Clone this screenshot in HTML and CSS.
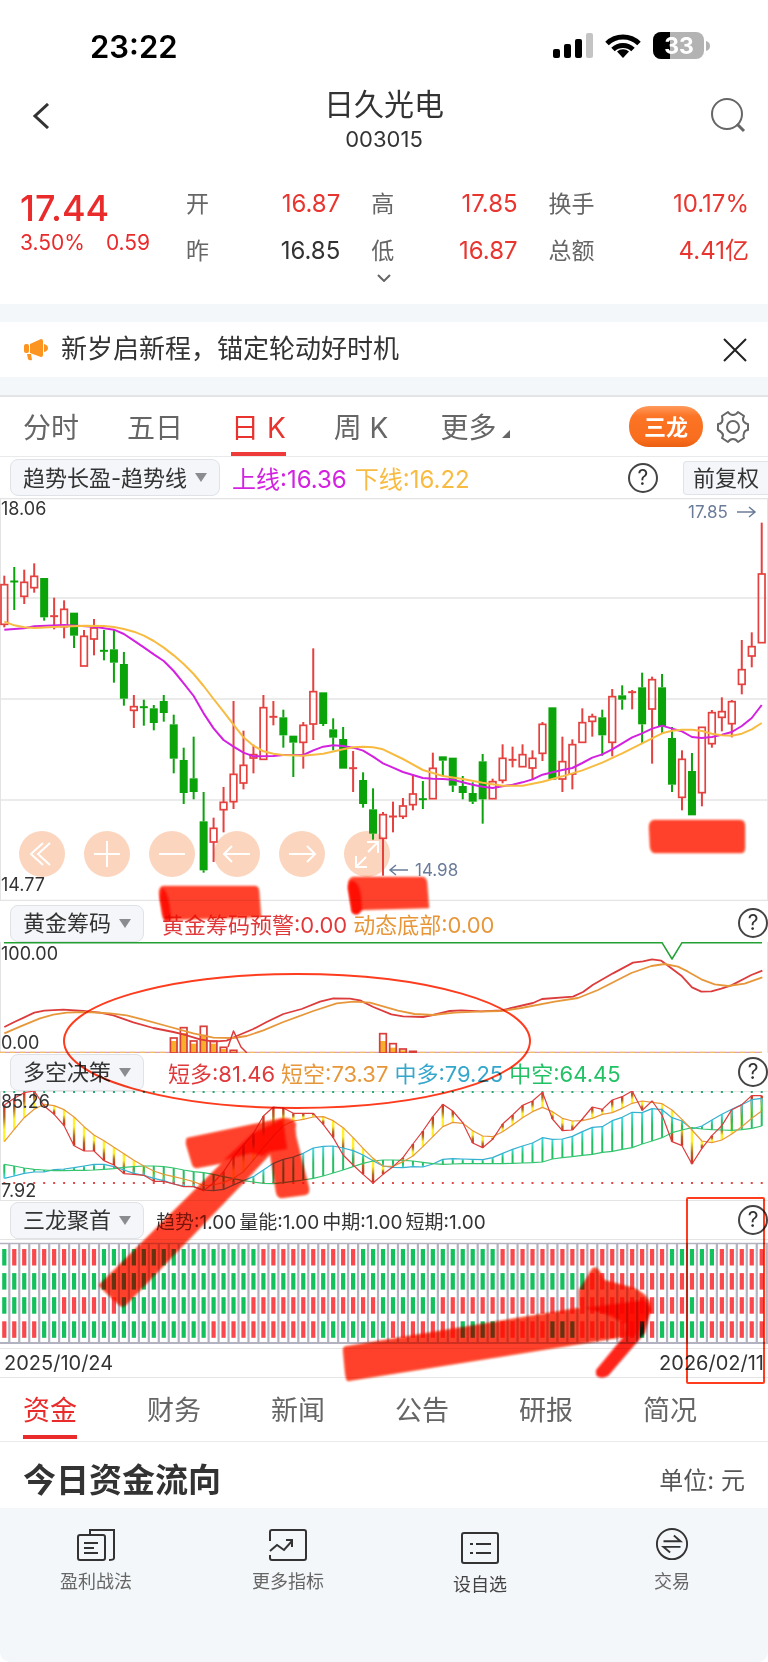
FILE: index.html
```html
<!DOCTYPE html>
<html lang="zh-CN">
<head>
    <meta charset="UTF-8">
    <meta name="viewport" content="width=device-width, initial-scale=1">
    <title>日久光电 003015</title>
    <link rel="stylesheet" href="styles.css">
</head>
<body>
    <div class="status">
        <span class="clock">23:22</span>
        <div class="status-icons">
            <svg width="40" height="26" viewBox="0 0 40 26">
                <rect x="0" y="16" width="7" height="9" rx="2"/>
                <rect x="11" y="11" width="7" height="14" rx="2"/>
                <rect x="22" y="6" width="7" height="19" rx="2"/>
                <rect x="33" y="0" width="7" height="25" rx="2" fill="#c4c4c4"/>
            </svg>
            <svg width="36" height="26" viewBox="0 0 36 26">
                <g fill="none" stroke="#000" stroke-width="5">
                    <path d="M2 10.500a23 23 0 0 1 32 0"/>
                    <path d="M8 16.500a14.500 14.500 0 0 1 20 0"/>
                </g>
                <path d="M18 25l-6-6.500a9 9 0 0 1 12 0z"/>
            </svg>
            <svg width="58" height="28" viewBox="0 0 58 28">
                <rect x="0" y="0" width="51" height="27" rx="8" fill="#b3b3b3"/>
                <path d="M17 0H8a8 8 0 0 0-8 8v11a8 8 0 0 0 8 8h9z"/>
                <path d="M53 9q4 1 4 5t-4 5z" fill="#b3b3b3"/>
                <text x="26" y="22" class="battery-text">33</text>
            </svg>
        </div>
    </div>

    <header class="topbar">
        <button class="icon-btn" aria-label="返回">
            <svg width="18" height="26" viewBox="0 0 18 26"><path d="M16 1L3 13l13 12" fill="none" stroke="#333" stroke-width="3"/></svg>
        </button>
        <div class="stock">
            <h1>日久光电</h1>
            <p>003015</p>
        </div>
        <button class="icon-btn" aria-label="搜索">
            <svg width="36" height="36" viewBox="0 0 36 36"><g fill="none" stroke="#666" stroke-width="2"><circle cx="17" cy="16" r="15"/><path d="M27 26l7 7" stroke-width="3"/></g></svg>
        </button>
    </header>

    <section class="quote">
        <div class="price">
            <strong>17.44</strong>
            <p><span>3.50%</span><span>0.59</span></p>
        </div>
        <dl class="pair">
            <dt>开</dt><dd class="up">16.87</dd>
            <dt>昨</dt><dd>16.85</dd>
        </dl>
        <dl class="pair">
            <dt>高</dt><dd class="up">17.85</dd>
            <dt>低</dt><dd class="up">16.87</dd>
        </dl>
        <dl class="pair">
            <dt>换手</dt><dd class="up">10.17%</dd>
            <dt>总额</dt><dd class="up">4.41亿</dd>
        </dl>
    </section>
    <button class="expand" aria-label="展开">
        <svg width="14" height="8" viewBox="0 0 14 8"><path d="M1 1l6 6 6-6" fill="none" stroke="#666" stroke-width="2"/></svg>
    </button>

    <div class="notice">
        <svg width="24" height="22" viewBox="0 0 24 22" fill="#fb9420">
            <path d="M6 5L17 0q2 0 2 2v14q0 2-2 2L6 14z"/>
            <rect x="0" y="5" width="5" height="9" rx="2"/>
            <path d="M20 5q4 1 4 4t-4 4zM3 15h4l1 6q-3 1-4-1z"/>
        </svg>
        <p>新岁启新程，锚定轮动好时机</p>
        <button class="icon-btn" aria-label="关闭">
            <svg width="24" height="24" viewBox="0 0 24 24"><path d="M1 1l22 22M23 1L1 23" stroke="#222" stroke-width="2"/></svg>
        </button>
    </div>

    <nav class="periods">
        <a href="#">分时</a>
        <a href="#">五日</a>
        <a href="#" class="on">日 K</a>
        <a href="#">周 K</a>
        <a href="#" class="more">更多</a>
        <button class="pill">三龙</button>
        <button class="icon-btn" aria-label="设置">
            <svg width="34" height="34" viewBox="0 0 34 34" fill="none" stroke="#666" stroke-width="2">
                <path d="M12 2q2 3 5 3t5-3l6 4q-2 4 0 6t4 2v6q-3 0-4 3t0 5l-6 4q-2-3-5-3t-5 3l-6-4q2-3 0-5t-4-3v-6q3 0 4-2t0-6z" stroke-linejoin="round"/>
                <circle cx="17" cy="17" r="6"/>
            </svg>
        </button>
    </nav>

    <div class="panel-head first">
        <label class="chip"><select aria-label="主图指标"><option>趋势长盈-趋势线</option></select></label>
        <p class="legend"><span class="c-magenta">上线:16.36</span><span class="c-gold">下线:16.22</span></p>
        <button class="help" aria-label="指标说明">?</button>
        <button class="adjust">前复权</button>
    </div>

    <main class="charts">
        <div class="kline">
            <svg id="kline" class="plot" viewBox="0 0 768 403"></svg>
            <div class="tools">
                <button aria-label="最左"><svg viewBox="0 0 46 46"><path d="M24 12L12 23l12 11M31 12L19 23l12 11"/></svg></button>
                <button aria-label="放大"><svg viewBox="0 0 46 46"><path d="M10 23h26M23 10v26"/></svg></button>
                <button aria-label="缩小"><svg viewBox="0 0 46 46"><path d="M10 23h26"/></svg></button>
                <button aria-label="左移"><svg viewBox="0 0 46 46"><path d="M36 23H10M18 15l-8 8 8 8"/></svg></button>
                <button aria-label="右移"><svg viewBox="0 0 46 46"><path d="M10 23h26M28 15l8 8-8 8"/></svg></button>
                <button aria-label="全屏"><svg viewBox="0 0 46 46"><path d="M23 11h11v11M34 11L24 21M12 25v11h11M12 36l10-10"/></svg></button>
            </div>
        </div>

        <div class="panel-head tall">
            <label class="chip"><select aria-label="副图指标一"><option>黄金筹码</option></select></label>
            <p class="legend"><span class="c-red">黄金筹码预警:0.00</span><span class="c-orange">动态底部:0.00</span></p>
            <button class="help" aria-label="指标说明">?</button>
        </div>
        <svg id="chips" class="plot" viewBox="0 0 768 111"></svg>

        <div class="panel-head">
            <label class="chip"><select aria-label="副图指标二"><option>多空决策</option></select></label>
            <p class="legend wide"><span class="c-red">短多:81.46</span><span class="c-orange">短空:73.37</span><span class="c-blue">中多:79.25</span><span class="c-green">中空:64.45</span></p>
            <button class="help" aria-label="指标说明">?</button>
        </div>
        <svg id="decision" class="plot" viewBox="0 0 768 110"></svg>

        <div class="panel-head">
            <label class="chip"><select aria-label="副图指标三"><option>三龙聚首</option></select></label>
            <p class="legend small"><span>趋势:1.00</span><span>量能:1.00</span><span>中期:1.00</span><span>短期:1.00</span></p>
            <button class="help" aria-label="指标说明">?</button>
        </div>
        <svg id="dragons" class="plot" viewBox="0 0 768 109"></svg>

        <div class="dates"><time>2025/10/24</time><time>2026/02/11</time></div>

        <!-- hand drawn marks over the charts, a light tint below and the ink on top -->
        <svg class="marks tint" viewBox="0 498 768 880"><use href="#strokes"/></svg>
        <svg class="marks ink" viewBox="0 498 768 880">
            <defs>
                <filter id="soft"><feGaussianBlur stdDeviation="1"/></filter>
            </defs>
            <g class="brush">
                <g id="strokes" filter="url(#soft)">
                    <path d="M163 886H255q3 0 4 4l2 27-95 3q-3 0-4-6l-3-21q0-6 4-7z"/>
                    <path d="M353 877h69q4 0 5 5l2 26-69 2q-3 6-8 2l-4-26q0-8 5-9z"/>
                    <path d="M654 820h86q5 0 5 6v22q0 5-4 5h-86q-4 0-5-6l-1-20q0-6 5-7z"/>
                    <path d="M100 1284L250 1135l24 15-26 28-122 127q-4 4-8-1l-17-16q-3-3-1-4z"/>
                    <path d="M187 1138l96-20q12 0 13 7l-9 26-90 17q-4 0-5-4l-6-20q0-5 1-6z"/>
                    <path d="M287 1122l8 2 1 12 13 52q1 6-4 7l-23 3q-5 0-6-6l-6-38z"/>
                    <path d="M343 1350q0-4 5-4L578 1308l68-5 4 8-14 24-288 46q-2 0-3-9z"/>
                    <path d="M579 1290l13-21q3-4 8 3l4 8 30 8q13 6 17 16v8l-26 15-10-7-22-9-14-4z"/>
                </g>
            </g>
            <g class="deep" filter="url(#soft)">
                <path d="M162 888q7 2 9 31l-6 3-5-24z"/>
                <path d="M350 881q8-2 11 14l1 15q-5 8-10 2l-4-24z"/>
                <path d="M224 1160l29-27 30-14 4 30-19 3-5 4-12-3z"/>
                <path d="M585 1308l30-4 30-4 6 9-6 24-37 43q-8 4-12-1v-5l28-34 2-12-20-10z"/>
            </g>
            <g fill="none" stroke="#ff3c1e" stroke-width="2">
                <ellipse cx="297" cy="1041" rx="233" ry="67"/>
                <rect x="687" y="1198" width="77" height="185" rx="1"/>
            </g>
        </svg>
    </main>

    <nav class="sections">
        <a href="#" class="on">资金</a>
        <a href="#">财务</a>
        <a href="#">新闻</a>
        <a href="#">公告</a>
        <a href="#">研报</a>
        <a href="#">简况</a>
    </nav>

    <section class="flow">
        <h2>今日资金流向</h2>
        <span>单位: 元</span>
    </section>

    <footer class="tabbar">
        <a href="#">
            <svg width="38" height="32" viewBox="0 0 38 32"><rect x="1" y="6" width="27" height="25" rx="2"/><path d="M13 5V1h24v28q0 2-5 2M7 14h14M7 19h10M7 24h14"/></svg>
            <span>盈利战法</span>
        </a>
        <a href="#">
            <svg width="38" height="32" viewBox="0 0 38 32"><path d="M1 12V3q0-2 2-2h32q2 0 2 2v26q0 2-2 2H3q-2 0-2-2v-3M1 22l7-6 7 5 8-9"/><path d="M17 11h6v7"/></svg>
            <span>更多指标</span>
        </a>
        <a href="#" class="pick">
            <svg width="38" height="32" viewBox="0 0 38 32"><rect x="1" y="1" width="36" height="30" rx="2"/><path d="M9 12h3M9 21h3M15 12h15M15 21h15"/></svg>
            <span>设自选</span>
        </a>
        <a href="#">
            <svg width="38" height="36" viewBox="0 0 38 36"><circle cx="19" cy="17" r="16"/><path d="M10 14h18l-7-6M28 20H10l7 6"/></svg>
            <span>交易</span>
        </a>
    </footer>

    <script src="charts.js"></script>
</body>
</html>
```
FILE: styles.css
```css
* {
    box-sizing: border-box;
}

body {
    margin: 0;
    background: #fff;
    color: #333;
    font-family: Inter, "Noto Sans CJK SC", sans-serif;
    font-size: 22px;
}

h1, h2, p, dl, dd {
    margin: 0;
    font-weight: 400;
}

a {
    color: inherit;
    text-decoration: none;
}

button {
    border: 0;
    padding: 0;
    background: none;
    color: inherit;
    font: inherit;
}

svg {
    display: block;
    flex: none;
}

.status {
    display: flex;
    justify-content: space-between;
    align-items: center;
    height: 92px;
    padding: 0 57px 0 90px;
}

.clock {
    color: #000;
    font-size: 31px;
    font-weight: 600;
}

.status-icons {
    display: flex;
    align-items: center;
    gap: 12px;
}

.battery-text {
    fill: #fff;
    font-size: 23px;
    font-weight: 700;
    text-anchor: middle;
}

.topbar {
    display: flex;
    justify-content: space-between;
    height: 88px;
    padding: 0 22px 0 32px;
}

.icon-btn {
    display: flex;
    align-items: center;
    justify-content: center;
}

.topbar .icon-btn {
    width: 46px;
    height: 47px;
}

.topbar .icon-btn:first-child {
    justify-content: flex-start;
    width: 36px;
}

.topbar .icon-btn:last-child {
    justify-content: flex-end;
    width: 36px;
}

.stock {
    flex: 1;
    text-align: center;
    padding-right: 10px;
}

.stock h1 {
    font-size: 30px;
    line-height: 24px;
}

.stock p {
    line-height: 24px;
    padding-top: 11px;
}

.up {
    color: #e8352f;
}

.quote {
    display: grid;
    grid-template-columns: 166fr 154fr 146fr 200fr;
    column-gap: 31px;
    padding: 0 19px 0 20px;
    height: 92px;
}

.price {
    color: #e92b2b;
}

.price strong {
    display: block;
    font-size: 36px;
    font-weight: 500;
    line-height: 40px;
    padding-top: 8px;
}

.price p {
    display: flex;
    gap: 21px;
    font-size: 21px;
    line-height: 30px;
}

.pair {
    display: grid;
    grid-template-columns: auto 1fr;
    grid-auto-rows: 47px;
    align-items: center;
    height: 86px;
    font-size: 23px;
    line-height: 40px;
}

.pair dt {
    color: #666;
}

.pair dd {
    text-align: right;
    font-size: 24px;
}

.quote {
    grid-template-columns: 135px 154fr 146fr 200fr;
}

.expand {
    display: flex;
    justify-content: center;
    width: 100%;
    height: 32px;
    padding-top: 2px;
}

.notice {
    display: flex;
    align-items: center;
    gap: 13px;
    height: 91px;
    padding: 0 21px 0 24px;
    border-top: 18px solid #f3f7f9;
    border-bottom: 18px solid #f3f7f9;
}

.notice p {
    flex: 1;
    font-size: 26px;
    line-height: 50px;
    padding-bottom: 2px;
}

.periods {
    display: flex;
    align-items: center;
    height: 62px;
    padding: 0 18px 0 23px;
    border-top: 2px solid #e2e4e6;
    border-bottom: 1px solid #e8eaec;
    color: #666;
    font-size: 28px;
}

.periods a {
    height: 100%;
    line-height: 63px;
    margin-right: 48px;
}

.periods .on {
    color: #e8332f;
    border-bottom: 4px solid #ee3a38;
}

.periods .more::after {
    content: "";
    display: inline-block;
    margin-left: 6px;
    border-left: 8px solid transparent;
    border-bottom: 8px solid #666;
}

.periods .more {
    margin-left: 4px;
    margin-right: auto;
}

.pill {
    width: 74px;
    height: 41px;
    margin-right: 13px;
    border-radius: 20px;
    background: linear-gradient(#ff9a5c, #fc7425 25%, #f96d1e 80%, #ea5f12);
    color: #fff;
    font-size: 22px;
    font-weight: 700;
    line-height: 36px;
}

.panel-head {
    display: flex;
    align-items: center;
    height: 38px;
    padding-left: 10px;
}

.panel-head.first,
.panel-head.tall {
    height: 41px;
}

.panel-head.tall {
    padding-top: 3px;
}

.chip {
    display: flex;
    align-items: center;
    min-width: 134px;
    height: 37px;
    padding: 0 12px;
    border: 1px solid #dfe3e8;
    border-radius: 8px;
    background: #f4f6f9;
}

.chip::after {
    content: "";
    margin-left: 7px;
    border: 6px solid transparent;
    border-top: 9px solid #8a8c8f;
    border-bottom: 0;
}

.chip select {
    appearance: none;
    border: 0;
    padding: 0;
    background: none;
    color: #333;
    font: inherit;
    line-height: 30px;
}

.legend {
    display: flex;
    flex: 1;
    gap: 6px;
    padding-left: 18px;
    font-size: 22px;
    white-space: nowrap;
}

.first .legend {
    gap: 8px;
    padding-left: 12px;
    font-size: 24px;
}

.legend.wide {
    padding-left: 24px;
}

.legend.small {
    gap: 3px;
    padding-left: 12px;
    font-size: 19px;
}

.c-magenta { color: #d321e0; }
.c-gold { color: #f8bb42; }
.c-red { color: #e0393c; }
.c-orange { color: #e7973a; }
.c-blue { color: #35a6cc; }
.c-green { color: #22c166; }

.help {
    width: 30px;
    height: 30px;
    border: 2px solid #444;
    border-radius: 50%;
    font-size: 21px;
    line-height: 24px;
}

.adjust {
    height: 34px;
    margin-left: 25px;
    padding: 0 9px;
    border: 1px solid #e0e4e8;
    border-right: 0;
    border-radius: 4px 0 0 4px;
    background: #f4f6f9;
    line-height: 30px;
}

.charts,
.kline {
    position: relative;
}

.plot {
    width: 100%;
    height: auto;
}

.kline .plot {
    position: relative;
    z-index: 1;
    pointer-events: none;
}

.plot text {
    fill: #333;
    font-size: 18px;
}

.plot .peak {
    fill: #6b7c99;
    font-size: 17px;
}

.tools {
    position: absolute;
    left: 19px;
    bottom: 24px;
    display: flex;
    gap: 19px;
}

.tools button {
    width: 46px;
    height: 46px;
    border-radius: 50%;
    background: #fcd5be;
}

.tools path {
    fill: none;
    stroke: #fff;
    stroke-width: 2;
}

.marks {
    position: absolute;
    inset: 0;
    z-index: 2;
    width: 100%;
    overflow: visible;
    pointer-events: none;
}

.marks.tint {
    fill: #ff4000;
    opacity: .35;
}

.marks.ink {
    mix-blend-mode: multiply;
}

.brush {
    fill: #ff2a08;
    opacity: .78;
}

.deep {
    fill: #ff0c00;
    opacity: .9;
}

.dates {
    display: flex;
    justify-content: space-between;
    padding: 0 4px;
    border-top: 1px solid #e5e5e5;
    border-bottom: 1px solid #e5e5e5;
    font-size: 20px;
    line-height: 28px;
}

.sections {
    display: flex;
    gap: 70px;
    height: 64px;
    padding: 0 23px;
    border-bottom: 1px solid #e8eaec;
    color: #666;
    font-size: 27px;
    line-height: 66px;
}

.sections .on {
    color: #e92b2b;
    height: 61px;
    border-bottom: 4px solid #e92b2b;
}

.flow {
    display: flex;
    justify-content: space-between;
    align-items: center;
    height: 66px;
    padding: 6px 23px 0;
}

.flow h2 {
    font-size: 33px;
    font-weight: 700;
}

.flow span {
    color: #555;
    font-size: 24px;
}

.tabbar {
    display: grid;
    grid-template-columns: repeat(4, 1fr);
    min-height: 154px;
    padding-top: 20px;
    border-radius: 0 0 10px 10px;
    background: #f3f7f9;
    color: #666;
    font-size: 18px;
}

.tabbar a {
    display: flex;
    flex-direction: column;
    align-items: center;
}

.tabbar svg {
    height: 34px;
    fill: none;
    stroke: #333;
    stroke-width: 2;
}

.tabbar span {
    line-height: 24px;
    margin-top: 8px;
}

.tabbar .pick {
    padding-top: 3px;
    color: #444;
}
```
FILE: charts.js
```js
var RED = "#e4413f";
var GREEN = "#0aa30a";

// x position of a trading day
function dayX(i) {
    return 4.3 + i * 9.966;
}

function line(x1, y1, x2, y2, color, width) {
    return "<line x1='" + x1 + "' y1='" + y1 + "' x2='" + x2 + "' y2='" + y2 + "' stroke='" + color + "' stroke-width='" + (width || 1) + "'/>";
}

function rect(x, y, w, h, fill, stroke) {
    return "<rect x='" + x + "' y='" + y + "' width='" + w + "' height='" + h + "' fill='" + fill + "'" + (stroke ? " stroke='" + stroke + "' stroke-width='1.7'" : "") + "/>";
}

function text(x, y, s, cls) {
    return "<text x='" + x + "' y='" + y + "' class='" + (cls || "") + "'>" + s + "</text>";
}

function poly(points, color, width) {
    return "<polyline points='" + points.join(" ") + "' fill='none' stroke='" + color + "' stroke-width='" + width + "' stroke-linejoin='round'/>";
}

// "x y,x y" list in thirds of a unit, moved up by top
function path(list, top, toX) {
    return list.split(",").map(function (p) {
        var v = p.trim().split(" ");
        return toX(+v[0]) + "," + (v[1] - top) / 3;
    });
}

// ---- daily candles: colour, high, body top, body bottom, low
var candles = [
    "r 257 284 403 412", "g 231 273 276 360", "r 239 277 319 342", "r 220 259 293 308", "g 264 264 382 392",
    "r 323 377 380 418", "r 331 358 410 445", "g 368 368 437 474", "r 420 439 528 528", "r 387 414 447 496",
    "g 420 481 484 511", "g 420 478 518 578", "g 486 522 626 647", "r 615 650 661 714", "g 629 650 653 707",
    "g 645 655 699 721", "g 615 633 669 695", "g 674 703 806 850", "g 773 810 909 942", "g 740 865 906 928",
    "g 906 994 1141 1148", "r 983 1015 1056 1116", "r 891 937 959 1027", "r 633 853 935 957", "r 722 826 879 898",
    "r 764 794 804 850", "r 615 653 808 808", "r 633 679 682 706", "g 659 682 736 773", "g 737 737 758 861",
    "r 696 706 757 836", "r 475 605 702 750", "g 607 607 702 708", "g 685 718 743 781", "g 711 747 836 836",
    "r 783 833 836 906", "g 847 870 942 953", "g 895 958 1031 1049", "r 966 974 1045 1157", "r 935 978 981 1027",
    "r 924 948 979 987", "r 854 912 944 961", "g 873 926 929 957", "r 788 835 926 926", "g 799 799 812 859",
    "g 803 803 887 906", "g 858 888 909 928", "g 877 909 935 942", "g 792 814 928 1001", "r 866 875 926 926",
    "r 763 805 871 880", "r 770 808 811 832", "r 763 794 830 830", "r 781 805 834 869", "r 696 703 790 813",
    "g 652 652 869 869", "r 740 815 867 906", "r 748 764 852 898", "r 655 698 757 757", "r 671 680 694 740",
    "g 659 682 736 797", "r 597 620 757 799", "g 586 616 629 659", "r 600 605 608 658", "g 548 592 703 761",
    "r 560 569 657 821", "g 552 592 709 731", "g 711 744 884 906", "r 781 808 922 961", "g 789 843 976 976",
    "r 712 712 908 949", "r 660 668 761 773", "r 622 665 682 724", "r 630 635 701 742", "r 450 539 583 613",
    "r 427 470 498 532", "r 98 252 458 458"
];
var upper = "0 419,2 415,3 409,6 405,9 410,11 419,12 432,13 452,14 472,15 493,16 513,17 543,18 580,19 618,20 670,21 715,22 750,23 770,24 788,25 799,27 798,28 795,30 795,31 781,32 770,33 766,34 768,35 773,36 782,37 800,38 820,39 833,40 846,41 855,42 864,43 866,44 867,45 869,46 877,47 884,48 890,49 894,50 889,51 884,52 877,53 868,54 854,55 847,56 840,57 834,58 819,59 803,60 793,61 778,62 760,63 742,64 730,65 716,66 707,67 716,68 724,69 741,70 744,71 741,72 734,73 726,74 708,75 684,76 645";
var lower = "0 395,1 406,2 412,3 414,5 411,8 407,10 408,11 411,12 417,13 425,14 437,15 453,16 473,17 496,18 522,19 552,20 588,21 627,22 665,23 704,24 742,25 767,26 784,27 791,28 795,30 797,32 791,34 778,35 772,36 770,37 772,38 778,40 807,42 840,44 858,46 867,48 878,50 887,52 887,54 875,56 859,58 841,60 818,62 790,64 760,66 730,67 722,68 719,69 719,70 723,71 731,72 736,73 737,74 731,75 718,76 699";

function drawKline() {
    var out = "";
    [0.5, 100, 201, 302, 402.5].forEach(function (y) {
        out += line(0, y, 768, y, "#e4e4e4", 1.5);
    });
    out += line(0.5, 0, 0.5, 403, "#e4e4e4") + line(767.5, 0, 767.5, 403, "#e4e4e4");
    candles.forEach(function (row, i) {
        var c = row.split(" ");
        var y = c.slice(1).map(function (v) { return (v - 24) / 3; });
        var x = dayX(i);
        var color = c[0] == "r" ? RED : GREEN;
        out += line(x, y[0], x, y[1], color, 2) + line(x, y[2], x, y[3], color, 2);
        if (y[2] - y[1] < 2) {
            out += line(x - 4, y[1] + 0.5, x + 4, y[1] + 0.5, color, 2);
        } else if (c[0] == "r") {
            out += rect(x - 3.3, y[1], 6.6, y[2] - y[1], "none", RED);
        } else {
            out += rect(x - 4, y[1], 8, y[2] - y[1], GREEN);
        }
    });
    out += poly(path(upper, 24, dayX), "#d321e0", 2);
    out += poly(path(lower, 24, dayX), "#f8bb42", 2);
    out += text(1, 17, "18.06") + text(1, 393, "14.77");
    out += text(688, 20, "17.85", "peak") + text(415, 378, "14.98", "peak");
    out += "<path d='M737 14h18M749 9l6 5-6 5M408 372h-18M396 367l-6 5 6 5' fill='none' stroke='#6b7c99' stroke-width='1.5'/>";
    document.getElementById("kline").innerHTML = out;
}

// ---- golden chips
var fast = "13 441,43 426,73 412,103 398,133 392,190 389,250 393,300 398,340 406,400 427,460 444,520 456,550 463,600 478,640 485,680 482,710 468,760 447,800 426,850 402,905 387,960 365,1000 355,1050 356,1080 361,1120 381,1174 403,1209 409,1269 411,1299 405,1349 393,1384 391,1444 394,1504 391,1599 369,1626 357,1719 350,1749 336,1779 314,1839 280,1899 248,1929 244,1956 238,1984 242,2014 265,2046 289,2076 322,2104 335,2134 334,2164 326,2194 316,2254 285,2287 272";
var slow = "13 460,60 440,120 415,160 404,200 398,260 396,330 400,380 406,430 419,500 438,580 460,640 473,700 474,740 468,790 451,850 426,940 393,1010 370,1060 365,1110 368,1194 392,1244 402,1299 405,1364 398,1434 395,1504 393,1564 384,1664 365,1734 354,1794 330,1894 279,1954 258,1994 252,2034 260,2064 275,2104 298,2144 313,2184 318,2234 311,2287 292";

function drawChips() {
    var third = function (x) { return x / 3; };
    var out = line(0.5, 0, 0.5, 111, "#e4e4e4") + line(767.5, 0, 767.5, 111, "#e4e4e4");
    out += line(0, 110.5, 762, 110.5, "#dba0b0", 1.5);
    out += "<line x1='0' y1='110.5' x2='762' y2='110.5' stroke='#f3c069' stroke-width='1.5' stroke-dasharray='5 5'/>";
    // day, outline top, fill top
    [[17, 474, 483], [18, 443, 459], [19, 483, 491], [20, 439, 464], [21, 483, 491], [22, 502, 507], [23, 511, 514], [38, 461, 483], [39, 491, 503], [40, 507, 511], [41, 514, 517]].forEach(function (b) {
        var x = dayX(b[0]) - 3.3;
        out += rect(x, (b[2] - 186) / 3, 6.6, (519 - b[2]) / 3, "#f6ae2b");
        out += rect(x, (b[1] - 186) / 3, 6.6, (519 - b[1]) / 3, "none", "#d93f3a");
    });
    out += poly(path(fast, 186, third), "#dc3c3c", 1.8);
    out += poly(path(slow, 186, third), "#e7973a", 1.8);
    out += poly(["228,105", "233.500,89", "241,105", "247,111"], "#dc3c3c", 1.5);
    out += poly(["4,0.700", "662,0.700", "672,17", "682,0.700", "762,0.700"], "#22a032", 1.5);
    out += text(1, 18, "100.00") + text(1, 107, "0.00");
    document.getElementById("chips").innerHTML = out;
}

// ---- long / short decision
var shortUp = [135, 115, 98, 93, 138, 163, 197, 257, 273, 273, 302, 315, 341, 343, 346, 364, 364, 372, 380, 380, 392, 368, 335, 290, 255, 220, 168, 141, 144, 160, 160, 160, 193, 233, 285, 315, 343, 369, 343, 320, 293, 252, 213, 170, 133, 153, 188, 249, 263, 238, 192, 165, 136, 123, 97, 177, 212, 210, 177, 141, 148, 120, 110, 93, 151, 123, 165, 245, 257, 312, 265, 227, 197, 149, 134, 107, 107];
var shortDown = [245, 208, 173, 148, 133, 137, 149, 171, 200, 225, 242, 262, 281, 301, 318, 333, 343, 350, 357, 365, 377, 375, 367, 355, 335, 300, 263, 228, 197, 183, 178, 171, 170, 182, 203, 233, 265, 295, 318, 319, 305, 288, 260, 230, 200, 187, 190, 212, 228, 230, 215, 195, 173, 155, 142, 155, 175, 183, 182, 175, 163, 158, 145, 130, 123, 127, 131, 150, 178, 210, 243, 248, 240, 222, 200, 175, 153];
var midUp = [355, 348, 340, 336, 336, 329, 327, 323, 318, 313, 313, 320, 330, 340, 346, 355, 362, 372, 378, 380, 390, 392, 388, 375, 362, 350, 330, 310, 298, 291, 280, 264, 259, 258, 264, 272, 285, 302, 318, 322, 323, 320, 321, 312, 298, 296, 297, 298, 299, 293, 280, 268, 258, 249, 233, 238, 237, 229, 215, 202, 200, 182, 172, 157, 158, 146, 149, 173, 183, 207, 198, 180, 163, 148, 134, 119, 115];
var midDown = [313, 318, 324, 328, 330, 332, 332, 331, 331, 330, 328, 326, 322, 320, 318, 318, 320, 324, 330, 335, 338, 343, 350, 356, 362, 366, 370, 371, 368, 364, 360, 355, 348, 339, 330, 320, 310, 303, 300, 300, 301, 303, 307, 311, 313, 312, 311, 311, 311, 311, 311, 310, 309, 308, 306, 297, 293, 290, 286, 283, 277, 274, 268, 263, 252, 243, 233, 218, 210, 203, 207, 209, 210, 211, 209, 205, 198];

function series(list) {
    return list.map(function (v, i) { return dayX(i) + "," + (v - 93) / 3; });
}

function gradient(id, stops) {
    return "<linearGradient id='" + id + "' x1='0' y1='0' x2='0' y2='1'>" + stops.map(function (c, i) {
        return "<stop offset='" + i / (stops.length - 1) + "' stop-color='" + c + "'/>";
    }).join("") + "</linearGradient>";
}

function drawDecision() {
    var out = "<defs>" + gradient("hot", ["#d62a20", "#b06a20", "#fff22a", "#fff22a"]) + gradient("cool", ["#fff22a", "#fff22a", "#b06a20", "#d62a20"])
        + gradient("sea", ["#3fe0f0", "#23bf62", "#23bf62"]) + gradient("sea2", ["#23bf62", "#23bf62", "#3fe0f0"]) + "</defs>";
    out += line(0, 0.5, 768, 0.5, "#e8e8e8") + line(0, 109.5, 768, 109.5, "#e4e4e4") + line(0.5, 0, 0.5, 110, "#e4e4e4");
    for (var i = 0; i < 77; i++) {
        var x = dayX(i);
        var a = (shortUp[i] - 93) / 3, b = (shortDown[i] - 93) / 3;
        out += rect(x - 1.2, Math.min(a, b), 2.4, Math.abs(a - b), a < b ? "url(#hot)" : "url(#cool)");
        a = (midUp[i] - 93) / 3;
        b = (midDown[i] - 93) / 3;
        out += rect(x - 1, Math.min(a, b), 2, Math.abs(a - b), a < b ? "url(#sea)" : "url(#sea2)");
        out += rect(x - 1, 0, 2, 2, "#2aa877") + rect(x - 1, 91, 2, 2, "#e04a4a");
    }
    out += poly(series(midUp), "#35b0cf", 1.2) + poly(series(midDown), "#35c470", 1.2);
    out += poly(series(shortDown), "#e7973a", 1.2) + poly(series(shortUp), "#dc3c3c", 1.2);
    out += text(1, 17, "85.26") + text(1, 106, "7.92");
    document.getElementById("decision").innerHTML = out;
}

// ---- three dragons, run lengths of each row
var rows = [
    "1g 9r 16g 10r 14g 17r 5g 5r",
    "59g 18r",
    "6g 6r 13g 13r 6g 25r 1g 7r",
    "4r 17g 11r 7g 7r 4g 5r 3g 6r 1g 1r 5g 6r"
];

function drawDragons() {
    var out = line(0, 0.5, 768, 0.5, "#e4e4e4") + line(0, 4.5, 768, 4.5, "#b2b2c0", 1.5) + line(0, 104, 768, 104, "#b2b2c0", 2);
    for (var i = 0; i < 77; i++) {
        out += line(dayX(i) + 5, 4, dayX(i) + 5, 104, "#b2b2c0", 2.2);
    }
    rows.forEach(function (row, r) {
        var day = 0;
        row.split(" ").forEach(function (run) {
            var color = run.slice(-1) == "r" ? "#f9474b" : "#12c05c";
            for (var n = parseInt(run); n > 0; n--) {
                out += rect(dayX(day) - 2.1, 10 + r * 24.1, 4.2, 16.5, color);
                day++;
            }
        });
    });
    document.getElementById("dragons").innerHTML = out;
}

drawKline();
drawChips();
drawDecision();
drawDragons();
```
